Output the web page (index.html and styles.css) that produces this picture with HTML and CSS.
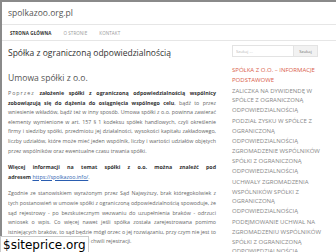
FILE: index.html
```html
<!DOCTYPE html>
<html lang="pl">
<head>
    <meta charset="UTF-8">
    <meta name="viewport" content="width=device-width, initial-scale=1.0">
    <title>spolkazoo.org.pl</title>
    <link rel="stylesheet" href="styles.css">
</head>
<body>
    <div class="page">
        <header class="site-header">
            <div class="site-title">spolkazoo.org.pl</div>
        </header>

        <!-- Main menu -->
        <nav class="main-nav">
            <a href="#" class="active">STRONA GŁÓWNA</a>
            <a href="#">O STRONIE</a>
            <a href="#">KONTAKT</a>
        </nav>

        <div class="wrap">
            <main class="content">
                <h1>Spółka z ograniczoną odpowiedzialnością</h1>
                <h2>Umowa spółki z o.o.</h2>

                <p><span class="spaced">Poprzez</span> <b>założenie spółki z ograniczoną odpowiedzialnością wspólnicy zobowiązują się do dążenia do osiągnięcia wspólnego celu</b>, bądź to przez wniesienie wkładów, bądź też w inny sposób. Umowa spółki z o.o. powinna zawierać elementy wymienione w art. 157 § 1 kodeksu spółek handlowych, czyli określenie firmy i siedziby spółki, przedmiotu jej działalności, wysokości kapitału zakładowego, liczby udziałów, które może mieć jeden wspólnik, liczby i wartości udziałów objętych przez wspólników oraz ewentualne czasu trwania spółki.</p>

                <p><b>Więcej informacji na temat spółki z o.o. można znaleźć pod</b> <span class="nowrap"><b>adresem</b> <a href="#">https://spolkazoo.info/</a>.</span></p>

                <p>Zgodnie ze stanowiskiem wyrażonym przez Sąd Najwyższy, brak któregokolwiek z tych postanowień w umowie spółki z ograniczoną odpowiedzialnością spowoduje, że sąd rejestrowy - po bezskutecznym wezwaniu do uzupełnienia braków - odrzuci wniosek o wpis. Co więcej nawet jeśli spółka została zarejestrowana pomimo istniejących braków, to sąd będzie mógł orzec o jej rozwiązaniu, przy czym nie jest to dopuszczalne po upływie 5 lat od chwili rejestracji.</p>

                <p>Umowa spółki z ograniczoną odpowiedzialnością powinna zostać zawarta w formie aktu notarialnego.</p>
            </main>

            <aside class="sidebar">
                <form class="search">
                    <input type="text" placeholder="Szukaj ...">
                    <button type="button">Szukaj</button>
                </form>
                <ul class="links">
                    <li><a href="#" class="current">SPÓŁKA Z O.O. – INFORMACJE PODSTAWOWE</a></li>
                    <li><a href="#">ZALICZKA NA DYWIDENDĘ W SPÓŁCE Z OGRANICZONĄ ODPOWIEDZIALNOŚCIĄ</a></li>
                    <li><a href="#">PODZIAŁ ZYSKU W SPÓŁCE Z OGRANICZONĄ ODPOWIEDZIALNOŚCIĄ</a></li>
                    <li><a href="#">ZGROMADZENIE WSPÓLNIKÓW SPÓŁKI Z OGRANICZONĄ ODPOWIEDZIALNOŚCIĄ</a></li>
                    <li><a href="#">UCHWAŁY ZGROMADZENIA WSPÓLNIKÓW SPÓŁKI Z OGRANICZONĄ ODPOWIEDZIALNOŚCIĄ</a></li>
                    <li><a href="#">PODEJMOWANIE UCHWAŁ NA ZGROMADZENIU WSPÓLNIKÓW SPÓŁKI Z OGRANICZONĄ ODPOWIEDZIALNOŚCIĄ</a></li>
                </ul>
            </aside>
        </div>
    </div>

    <div class="badge">$siteprice.org</div>
</body>
</html>
```

FILE: styles.css
```css
html, body {
    margin: 0;
    padding: 0;
}

body {
    font-family: "Open Sans", "Liberation Sans", sans-serif;
    background: #ffffff;
    color: #666;
    height: 252px;
    overflow: hidden;
}

.page {
    border-top: 2px solid #8a8a8a;
    border-left: 2px solid #8a8a8a;
    height: 250px;
    overflow: hidden;
}

.site-header {
    padding: 6px 6px 0;
    height: 16px;
    border-bottom: 1px solid #e6e6e6;
}

.site-title {
    font-size: 8.5px;
    color: #555;
    line-height: 10px;
}

.main-nav {
    display: flex;
    gap: 12px;
    padding: 0 8px;
    height: 15px;
    align-items: center;
    border-bottom: 1px solid #e6e6e6;
}

.main-nav a {
    font-size: 4.5px;
    color: #999;
    text-decoration: none;
    letter-spacing: 0.1px;
}

.main-nav a.active {
    color: #333;
    font-weight: bold;
}

.wrap {
    display: flex;
    padding: 0 6px;
    gap: 16px;
}

.content {
    width: 208px;
    flex-shrink: 0;
}

h1 {
    font-size: 8.5px;
    font-weight: normal;
    color: #333;
    margin: 7px 0 0;
    line-height: 10px;
}

h2 {
    font-size: 8.6px;
    font-weight: normal;
    color: #555;
    margin: 15px 0 6px;
    line-height: 10px;
}

.content p {
    font-size: 5.3px;
    line-height: 9.6px;
    text-align: justify;
    margin: 0 0 7px;
    color: #666;
}

.content p b {
    color: #333;
}

.spaced {
    letter-spacing: 1px;
}

.nowrap {
    white-space: nowrap;
}

.content a {
    color: #2a5db0;
}

.sidebar {
    flex: 1;
    padding-top: 4px;
}

.search {
    display: flex;
    height: 12px;
    width: 86px;
}

.search input {
    width: 62px;
    box-sizing: border-box;
    border: 1px solid #e3e3e3;
    font-family: inherit;
    font-size: 4.2px;
    padding: 0 3px;
    margin: 0;
    color: #999;
}

.search input::placeholder {
    color: #bbb;
}

.search button {
    flex: 1;
    border: 1px solid #e3e3e3;
    border-left: none;
    background: #f2f2f2;
    font-family: inherit;
    font-size: 4.2px;
    color: #777;
    padding: 0;
    margin: 0;
}

.links {
    list-style: none;
    margin: 9px 0 0;
    padding: 0;
}

.links li {
    font-size: 6px;
    line-height: 9.8px;
    margin-bottom: 1px;
}

.links a {
    color: #888;
    text-decoration: none;
}

.links a.current {
    color: #d9604a;
}

.badge {
    position: absolute;
    left: 0;
    top: 236px;
    background: #fff;
    color: #000;
    font-family: "DejaVu Sans", sans-serif;
    font-size: 12px;
    line-height: 16px;
    padding: 0 2px;
    border: 1px solid #ccc;
}
```
